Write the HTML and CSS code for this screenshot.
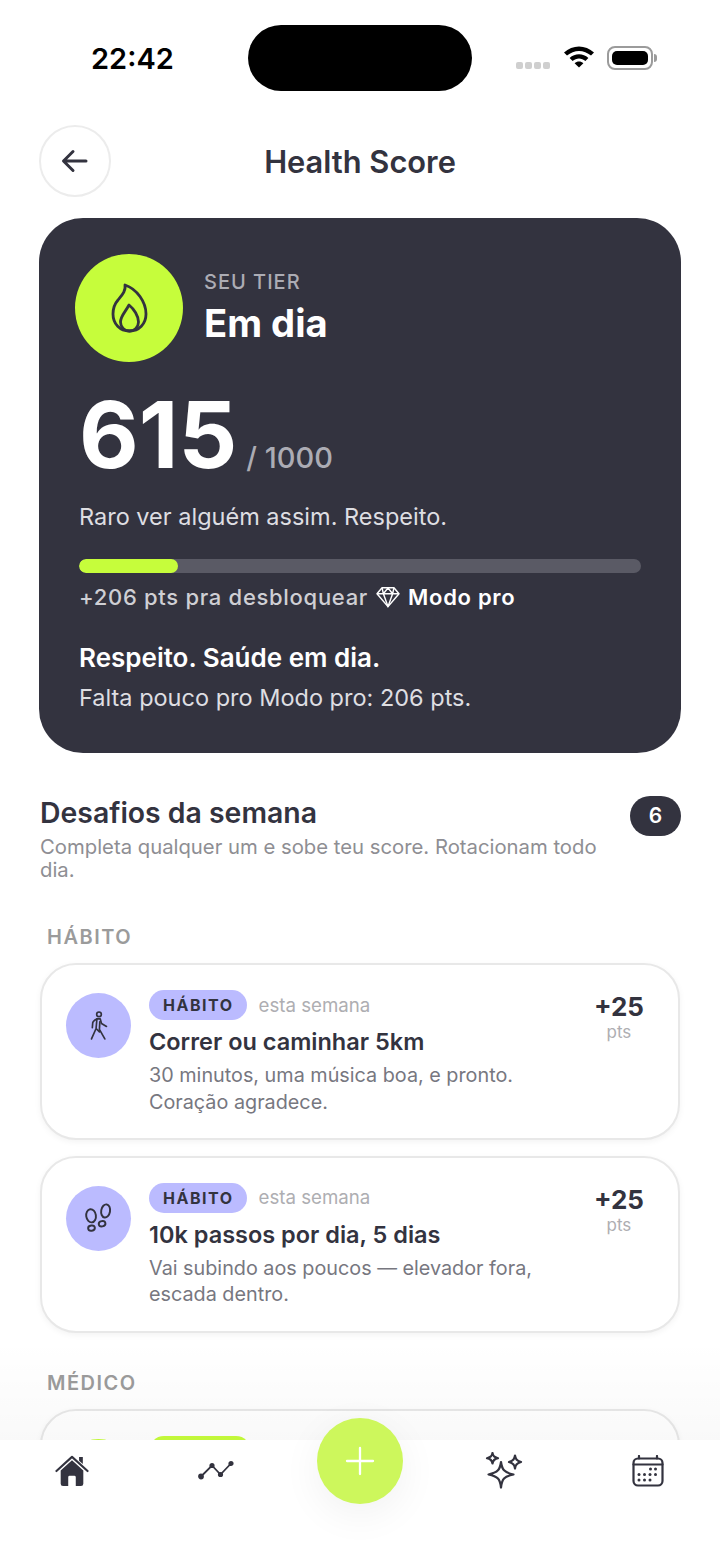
FILE: index.html
```html
<!DOCTYPE html>
<html lang="pt-BR">
<head>
    <meta charset="UTF-8">
    <meta name="viewport" content="width=device-width, initial-scale=1.0">
    <title>Health Score</title>
    <link rel="stylesheet" href="styles.css">
</head>
<body>
    <div class="screen">
        <div class="status-bar">
            <span class="time">22:42</span>
            <div class="island"></div>
            <div class="status-icons">
                <div class="signal"><i></i><i></i><i></i><i></i></div>
                <svg class="wifi" width="32" height="24" viewBox="0 0 32 24">
                    <path d="M1 8.500C9.500 .5 22.500 .5 31 8.500L28 11.600C21 5.300 11 5.300 4 11.600Z" fill="#000"/>
                    <path d="M6.600 14C12 9 20 9 25.400 14L22.400 17C18.600 13.600 13.400 13.600 9.600 17Z" fill="#000"/>
                    <path d="M11.600 19.200C14.200 17 17.800 17 20.400 19.200L16 23.600Z" fill="#000"/>
                </svg>
                <div class="battery"><div class="battery-level"></div></div>
                <div class="battery-tip"></div>
            </div>
        </div>

        <div class="header">
            <button class="back-btn">
                <svg width="30" height="30" viewBox="0 0 30 30" fill="none" stroke="#33333F" stroke-width="3" stroke-linecap="round" stroke-linejoin="round">
                    <path d="M26 15H4M13 5.500L3.500 15L13 24.500"/>
                </svg>
            </button>
            <h1>Health Score</h1>
        </div>

        <div class="score-card">
            <div class="tier-row">
                <div class="tier-icon">
                    <svg width="37" height="50" viewBox="0 0 37 50" fill="none" stroke="#33333F" stroke-width="2.800" stroke-linejoin="round">
                        <path d="M14 2C15 8 11 12 7 17C3.500 21 2 26 2 31C2 41 9 48 18.500 48C28 48 35 41 35 31C35 19 26 6 14 2Z"/>
                        <path d="M18 22C15 28 9.500 33 9.500 39C9.500 44 13.500 48 18.500 48C23.500 48 27.500 44 27.500 39C27.500 33 23 26 18 22Z"/>
                    </svg>
                </div>
                <div class="tier-text">
                    <span class="tier-label">SEU TIER</span>
                    <span class="tier-name">Em dia</span>
                </div>
            </div>
            <div class="score-row">
                <span class="score">615</span>
                <span class="score-max">/ 1000</span>
            </div>
            <p class="score-msg">Raro ver alguém assim. Respeito.</p>
            <div class="progress"><div class="progress-fill" style="width: 17.6%"></div></div>
            <p class="unlock">
                +206 pts pra desbloquear
                <svg class="gem" width="24" height="22" viewBox="0 0 26 24" fill="none" stroke="#fff" stroke-width="1.600" stroke-linejoin="round">
                    <path d="M6.500 2H19.500L25 8.500L13 22.500L1 8.500Z"/>
                    <path d="M1 8.500H25M8 8.500L13 22.500L18 8.500M6.500 2L8 8.500L13 2L18 8.500L19.500 2"/>
                </svg>
                <strong>Modo pro</strong>
            </p>
            <h2 class="card-title">Respeito. Saúde em dia.</h2>
            <p class="card-sub">Falta pouco pro Modo pro: 206 pts.</p>
        </div>

        <div class="section-head">
            <div class="section-text">
                <h2>Desafios da semana</h2>
                <p>Completa qualquer um e sobe teu score. Rotacionam todo dia.</p>
            </div>
            <span class="count">6</span>
        </div>

        <div class="group-label">HÁBITO</div>
        <div class="challenge">
            <div class="challenge-icon">
                <svg width="20" height="30" viewBox="0 0 24 36" fill="none" stroke="#33333F" stroke-width="2" stroke-linecap="round" stroke-linejoin="round">
                    <circle cx="12" cy="4" r="2.800"/>
                    <path d="M9.500 9.500C7 10.500 5 12 4.500 14L4 20M9.500 9.500L13.500 9.500L15 15L21 18.500"/>
                    <path d="M9.500 9.500L8.500 21L3 33.500M13 13L12.500 22L19 33.500M8.500 21L12.500 25"/>
                </svg>
            </div>
            <div class="challenge-body">
                <div class="challenge-meta">
                    <span class="pill">HÁBITO</span>
                    <span class="when">esta semana</span>
                </div>
                <h3>Correr ou caminhar 5km</h3>
                <p>30 minutos, uma música boa, e pronto. Coração agradece.</p>
            </div>
            <div class="points"><b>+25</b><span>pts</span></div>
        </div>
        <div class="challenge">
            <div class="challenge-icon">
                <svg width="30" height="30" viewBox="0 0 34 34" fill="none" stroke="#33333F" stroke-width="2.200">
                    <ellipse cx="8" cy="14.500" rx="5.500" ry="7.500" transform="rotate(-8 8 14.500)"/>
                    <ellipse cx="8.500" cy="28.500" rx="3.800" ry="3" transform="rotate(-8 8.500 28.500)"/>
                    <ellipse cx="24.500" cy="9" rx="5" ry="7.500" transform="rotate(10 24.500 9)"/>
                    <ellipse cx="20.500" cy="23.500" rx="3.800" ry="3" transform="rotate(-10 20.500 23.500)"/>
                </svg>
            </div>
            <div class="challenge-body">
                <div class="challenge-meta">
                    <span class="pill">HÁBITO</span>
                    <span class="when">esta semana</span>
                </div>
                <h3>10k passos por dia, 5 dias</h3>
                <p>Vai subindo aos poucos — elevador fora, escada dentro.</p>
            </div>
            <div class="points"><b>+25</b><span>pts</span></div>
        </div>

        <div class="group-label">MÉDICO</div>
        <div class="challenge">
            <div class="challenge-icon lime"></div>
            <div class="challenge-body">
                <div class="challenge-meta">
                    <span class="pill lime">MÉDICO</span>
                </div>
            </div>
        </div>

        <div class="fade"></div>
        <nav class="tab-bar">
            <a class="tab">
                <svg width="34" height="33" viewBox="0 0 36 35">
                    <path d="M6 16.500L18 5.500L30 16.500V30.500A2.500 2.500 0 0 1 27.500 33H22V23.500A1.500 1.500 0 0 0 20.500 22H15.500A1.500 1.500 0 0 0 14 23.500V33H8.500A2.500 2.500 0 0 1 6 30.500Z" fill="#33333F"/>
                    <path d="M1.500 17L18 2L34.500 17" fill="none" stroke="#33333F" stroke-width="2.200" stroke-linecap="round" stroke-linejoin="round"/>
                    <path d="M25.500 2H29.500V9.500L25.500 6Z" fill="#33333F"/>
                </svg>
            </a>
            <a class="tab">
                <svg width="36" height="22" viewBox="0 0 36 22" fill="none" stroke="#33333F" stroke-width="1.800" stroke-linecap="round">
                    <path d="M3 16.500L14 5.500L22.500 14.500L33 3.500"/>
                    <g fill="#33333F"><circle cx="3" cy="16.500" r="2"/><circle cx="14" cy="5.500" r="1.700"/><circle cx="22.500" cy="14.500" r="1.700"/><circle cx="33" cy="3.500" r="1.700"/></g>
                </svg>
            </a>
            <div class="tab"></div>
            <a class="tab">
                <svg width="38" height="38" viewBox="0 0 38 38" fill="none" stroke="#33333F" stroke-width="2.200" stroke-linejoin="round">
                    <path d="M16 10C17 17.500 19 20.500 28.500 22.500C19 24.500 17 27 16 35.500C15 27 13 24.500 3.500 22.500C13 20.500 15 17.500 16 10Z"/>
                    <path d="M7.500 1C8 4 9 5.300 13 6.200C9 7 8 8.500 7.500 11.500C7 8.500 6 7 2 6.200C6 5.300 7 4 7.500 1Z"/>
                    <path d="M30 3.500C30.500 7 31.500 8.500 36 10C31.500 11.500 30.500 13 30 16.500C29.500 13 28.500 11.500 24 10C28.500 8.500 29.500 7 30 3.500Z"/>
                </svg>
            </a>
            <a class="tab">
                <svg width="32" height="32" viewBox="0 0 32 32" fill="none" stroke="#33333F" stroke-width="2.200" stroke-linecap="round">
                    <rect x="1.500" y="3.500" width="29" height="27" rx="4.500"/>
                    <path d="M1.500 9.500H30.500M7 1V3.500M25 1V3.500"/>
                    <g fill="#33333F" stroke="none">
                        <circle cx="18.500" cy="14" r="1.500"/><circle cx="23.500" cy="14" r="1.500"/>
                        <circle cx="7" cy="19.500" r="1.500"/><circle cx="12.500" cy="19.500" r="1.500"/><circle cx="18" cy="19.500" r="1.500"/><circle cx="23.500" cy="19.500" r="1.500"/>
                        <circle cx="7" cy="25" r="1.500"/><circle cx="12.500" cy="25" r="1.500"/><circle cx="18" cy="25" r="1.500"/>
                    </g>
                </svg>
            </a>
        </nav>
        <button class="fab">
            <svg width="30" height="30" viewBox="0 0 30 30" stroke="#fff" stroke-width="2.300" stroke-linecap="round">
                <path d="M15 2V28M2 15H28"/>
            </svg>
        </button>
    </div>
</body>
</html>
```

FILE: styles.css
```css
* {
    margin: 0;
    padding: 0;
    box-sizing: border-box;
    font-family: 'Inter', sans-serif;
}

body {
    background-color: #fff;
}

.screen {
    position: relative;
    width: 720px;
    height: 1565px;
    overflow: hidden;
    padding: 25px 40px 0;
    color: #33333F;
}

/* status bar */
.status-bar {
    display: flex;
    align-items: center;
    height: 66px;
    margin-bottom: 35px;
}

.time {
    width: 208px;
    padding-left: 51px;
    font-size: 29px;
    font-weight: 600;
    color: #000;
}

.island {
    width: 224px;
    height: 66px;
    background-color: #000;
    border-radius: 33px;
}

.status-icons {
    display: flex;
    align-items: center;
    margin-left: 44px;
}

.signal {
    display: flex;
    gap: 2px;
    margin-top: 14px;
    margin-right: 13px;
}

.signal i {
    width: 7px;
    height: 7px;
    border-radius: 2px;
    background-color: #cfcfcf;
}

.wifi {
    margin-right: 12px;
    margin-top: -4px;
}

.battery {
    width: 46px;
    height: 24px;
    padding: 3px;
    border: 2px solid #9b9b9b;
    border-radius: 8px;
}

.battery-level {
    height: 100%;
    background-color: #000;
    border-radius: 5px;
}

.battery-tip {
    width: 3px;
    height: 8px;
    margin-left: 1px;
    background-color: #9b9b9b;
    border-radius: 0 3px 3px 0;
}

/* header */
.header {
    position: relative;
    display: flex;
    align-items: center;
    justify-content: center;
    height: 70px;
    margin-bottom: 22px;
}

.header h1 {
    font-size: 30.800px;
    font-weight: 600;
}

.back-btn {
    position: absolute;
    left: -1px;
    top: -1px;
    display: flex;
    align-items: center;
    justify-content: center;
    width: 72px;
    height: 72px;
    background: #fff;
    border: 2px solid #ececec;
    border-radius: 50%;
}

/* score card */
.score-card {
    height: 535px;
    margin: 0 -1px 43px;
    padding: 36px 40px 0 40px;
    background-color: #33333F;
    border-radius: 44px;
    color: #fff;
}

.tier-row {
    display: flex;
    align-items: center;
    gap: 21px;
    margin-left: -4px;
}

.tier-icon {
    display: flex;
    align-items: center;
    justify-content: center;
    width: 108px;
    height: 108px;
    background-color: #C6FD3B;
    border-radius: 50%;
}

.tier-text {
    display: flex;
    flex-direction: column;
    gap: 6px;
}

.tier-label {
    font-size: 20px;
    font-weight: 500;
    letter-spacing: 1px;
    color: #acacb4;
}

.tier-name {
    font-size: 38.200px;
    font-weight: 700;
}

.score-row {
    display: flex;
    align-items: baseline;
    gap: 9px;
    height: 110px;
    margin-top: 18px;
}

.score {
    font-size: 92px;
    font-weight: 700;
    line-height: 110px;
}

.score-max {
    font-size: 29px;
    font-weight: 500;
    color: #acacb4;
}

.score-msg {
    margin-top: 12px;
    font-size: 23.500px;
    color: #dedee2;
}

.progress {
    height: 14px;
    margin-top: 28px;
    background-color: #5a5a65;
    border-radius: 7px;
    overflow: hidden;
}

.progress-fill {
    height: 100%;
    background-color: #C6FD3B;
    border-radius: 7px;
}

.unlock {
    display: flex;
    align-items: center;
    gap: 8px;
    margin-top: 11px;
    font-size: 22px;
    font-weight: 500;
    letter-spacing: 0.700px;
    color: #cfcfd4;
}

.unlock strong {
    font-size: 22px;
    font-weight: 600;
    color: #fff;
}

.card-title {
    margin-top: 32px;
    font-size: 26px;
    font-weight: 600;
}

.card-sub {
    margin-top: 10px;
    font-size: 23.500px;
    color: #dedee2;
}

/* challenges */
.section-head {
    display: flex;
    justify-content: space-between;
    align-items: flex-start;
    margin-bottom: 44px;
}

.section-text {
    width: 570px;
}

.section-text h2 {
    margin-top: -1px;
    font-size: 28.400px;
    font-weight: 600;
}

.section-text p {
    margin-top: 5px;
    font-size: 20.300px;
    line-height: 23px;
    color: #8e8e93;
}

.count {
    width: 51px;
    height: 40px;
    margin-right: -1px;
    background-color: #33333F;
    border-radius: 20px;
    color: #fff;
    font-size: 21px;
    font-weight: 600;
    line-height: 40px;
    text-align: center;
}

.group-label {
    margin-left: 7px;
    margin-bottom: 14px;
    font-size: 20px;
    font-weight: 600;
    letter-spacing: 1.500px;
    color: #9b9b9b;
}

.challenge {
    display: flex;
    align-items: flex-start;
    height: 177px;
    margin-bottom: 15.500px;
    padding: 25px 34px 0 24px;
    background-color: #fff;
    border: 2px solid #e8e8e8;
    border-radius: 36px;
    box-shadow: 0 2px 6px rgba(0, 0, 0, 0.05);
}

.challenge + .group-label {
    margin-top: 38px;
}

.challenge-icon {
    display: flex;
    align-items: center;
    justify-content: center;
    flex-shrink: 0;
    width: 65px;
    height: 65px;
    margin-top: 3px;
    margin-right: 18px;
    background-color: #BBBBFF;
    border-radius: 50%;
}

.challenge-icon.lime {
    background-color: #C6FD3B;
}

.challenge-body {
    flex: 1;
}

.challenge-meta {
    display: flex;
    align-items: center;
    gap: 11px;
}

.pill {
    height: 30px;
    padding: 0 14px;
    background-color: #BBBBFF;
    border-radius: 15px;
    font-size: 16px;
    font-weight: 700;
    letter-spacing: 1.500px;
    line-height: 30px;
}

.pill.lime {
    background-color: #C6FD3B;
}

.when {
    font-size: 18.700px;
    color: #aeaeb2;
}

.challenge-body h3 {
    margin-top: 7px;
    font-size: 23.500px;
    font-weight: 600;
}

.challenge-body p {
    width: 420px;
    margin-top: 6px;
    font-size: 19.800px;
    line-height: 26.500px;
    color: #77777f;
}

.points {
    display: flex;
    flex-direction: column;
    align-items: center;
    margin-top: 1px;
}

.points b {
    font-size: 26px;
    font-weight: 700;
}

.points span {
    font-size: 17px;
    color: #aeaeb2;
}

/* bottom nav */
.fade {
    position: absolute;
    left: 0;
    right: 0;
    top: 1340px;
    height: 100px;
    background: linear-gradient(rgba(0, 0, 0, 0), rgba(0, 0, 0, 0.025));
}

.tab-bar {
    position: absolute;
    left: 0;
    right: 0;
    bottom: 0;
    display: grid;
    grid-template-columns: repeat(5, 144px);
    height: 125px;
    background-color: #fff;
}

.tab {
    display: flex;
    justify-content: center;
    align-items: center;
    height: 62px;
}

.fab {
    position: absolute;
    left: 317px;
    top: 1418px;
    display: flex;
    align-items: center;
    justify-content: center;
    width: 86px;
    height: 86px;
    background-color: #CDF75C;
    border: none;
    border-radius: 50%;
    box-shadow: 0 10px 40px rgba(0, 0, 0, 0.06);
}
```
